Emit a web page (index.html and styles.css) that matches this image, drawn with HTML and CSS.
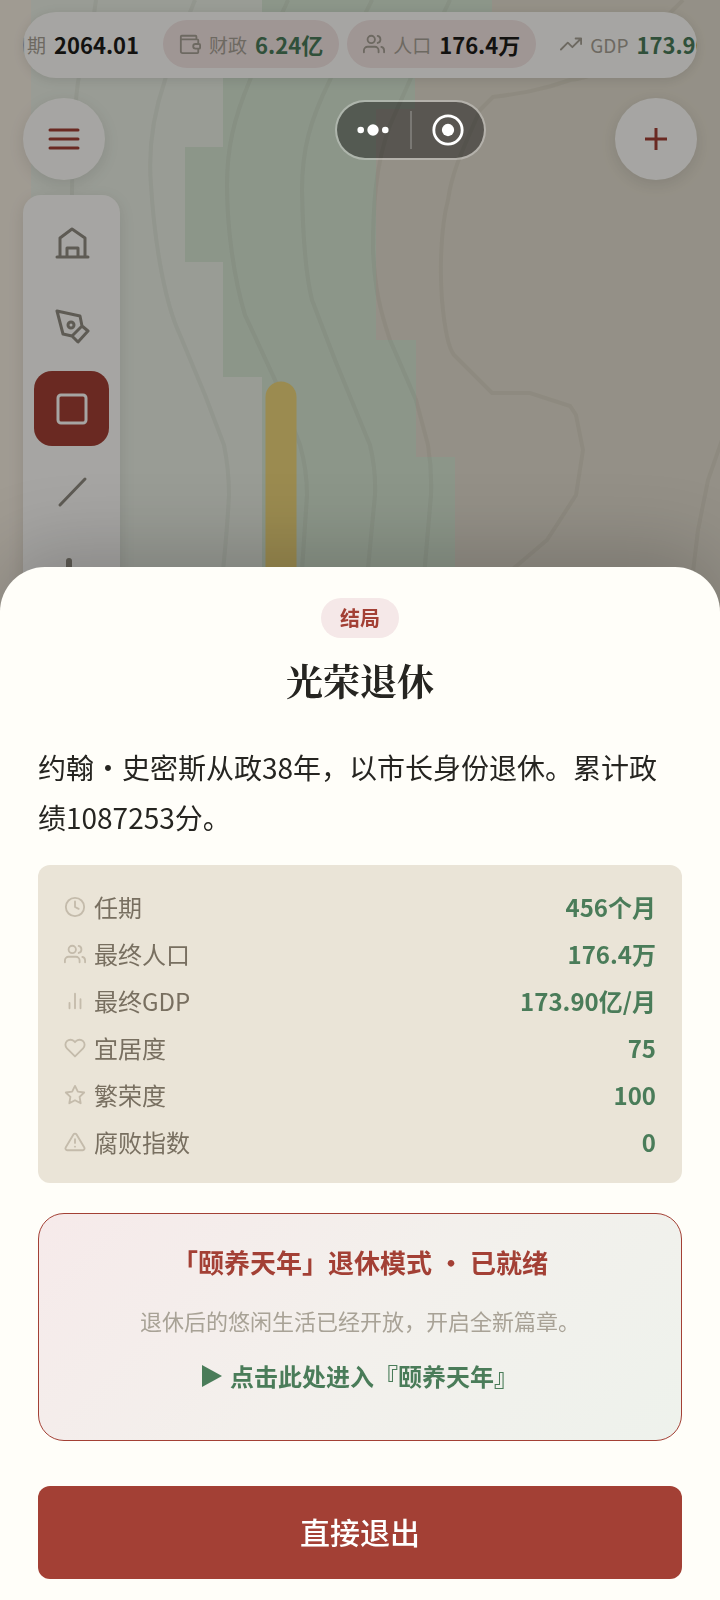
FILE: index.html
```
<!DOCTYPE html>
<html lang="zh-CN">
<head>
    <meta charset="UTF-8">
    <meta name="viewport" content="width=device-width, initial-scale=1.0">
    <title>光荣退休</title>
    <link rel="stylesheet" href="styles.css">
</head>
<body>
    <!-- 共用图标 -->
    <svg class="sprite" aria-hidden="true">
        <symbol id="i-wallet" viewBox="0 0 24 24"><path d="M19 7V4a1 1 0 0 0-1-1H3a1 1 0 0 0-1 1v16a2 2 0 0 0 2 2h16a1 1 0 0 0 1-1v-4M2 7h18a1 1 0 0 1 1 1v4h-3a2 2 0 0 0 0 5h4a1 1 0 0 0 1-1v-3a1 1 0 0 0-1-1h-1"/></symbol>
        <symbol id="i-users" viewBox="0 0 24 24"><path d="M17 21v-2a4 4 0 0 0-4-4H5a4 4 0 0 0-4 4v2M23 21v-2a4 4 0 0 0-3-3.87M16 3.13a4 4 0 0 1 0 7.75"/><circle cx="9" cy="7" r="4"/></symbol>
        <symbol id="i-trend" viewBox="0 0 24 24"><path d="M23 6l-9.500 9.500-5-5L1 18M17 6h6v6"/></symbol>
        <symbol id="i-clock" viewBox="0 0 24 24"><circle cx="12" cy="12" r="10"/><path d="M12 6v6l4 2"/></symbol>
        <symbol id="i-bars" viewBox="0 0 24 24"><path d="M6 20v-6M12 20V4M18 20V10"/></symbol>
        <symbol id="i-heart" viewBox="0 0 24 24"><path d="M20.840 4.610a5.500 5.500 0 0 0-7.780 0L12 5.670l-1.060-1.060a5.500 5.500 0 0 0-7.780 7.780L12 21.230l8.840-8.840a5.500 5.500 0 0 0 0-7.780z"/></symbol>
        <symbol id="i-star" viewBox="0 0 24 24"><path d="M12 2l3.090 6.260L22 9.270l-5 4.870 1.180 6.880L12 17.770l-6.180 3.250L7 14.140 2 9.270l6.910-1.010z"/></symbol>
        <symbol id="i-alert" viewBox="0 0 24 24"><path d="M10.290 3.860L1.820 18a2 2 0 0 0 1.710 3h16.940a2 2 0 0 0 1.710-3L13.710 3.860a2 2 0 0 0-3.420 0zM12 9v4M12 17v.1"/></symbol>
    </svg>

    <div class="game">
        <!-- 地图 -->
        <svg class="map" viewBox="0 0 720 620" preserveAspectRatio="xMidYMin slice" aria-hidden="true">
            <rect class="ground" width="720" height="620"/>
            <rect class="shore" width="31" height="620"/>
            <path class="grass" d="M31 0H262V32H223V147H185V262H223V377H262V620H31z"/>
            <path class="forest" d="M262 0H492V32H415V109H376V340H416V457H455V620H262V377H223V262H185V147H223V32H262z"/>
            <g class="contour">
                <path d="M96 0C92 35 82 60 78 82C73 120 72 160 72 200"/>
                <path d="M195 0C185 25 172 55 165 80C153 115 148 150 151 185C155 250 166 305 180 335L205 395L224 445Q229 470 229 495Q227 535 220 600"/>
                <path d="M288 0C278 25 260 50 250 80C233 120 227 150 227 185C227 225 233 275 245 315L275 380L300 445Q307 470 307 495L300 600"/>
                <path d="M372 0C358 30 340 55 330 80C310 120 302 150 302 190C303 245 307 280 312 300L335 360L370 445Q376 470 375 495L365 600"/>
                <path d="M450 0C436 30 420 55 410 80L390 125C375 165 373 210 373 250C375 290 380 310 390 340L416 400L428 445Q432 470 431 495L422 600"/>
                <path d="M683 0L668 15C640 50 610 75 570 80C540 91 515 94 493 97L480 110C465 145 452 170 448 200C440 230 440 275 442 300Q446 345 454 355L492 393H530L570 406L576 415L583 450L576 495L560 520L547 540L500 580"/>
                <path d="M722 440L708 480L698 530L692 580"/>
            </g>
            <path class="road" d="M281 397V640"/>
        </svg>

        <!-- 顶部状态栏 -->
        <header class="status">
            <ul class="status-list">
                <li class="chip">
                    <svg class="icon"><use href="#i-clock"/></svg>
                    <span class="chip-label">日期</span>
                    <b>2064.01</b>
                </li>
                <li class="chip chip-tint">
                    <svg class="icon"><use href="#i-wallet"/></svg>
                    <span class="chip-label">财政</span>
                    <b class="up">6.24亿</b>
                </li>
                <li class="chip chip-tint">
                    <svg class="icon"><use href="#i-users"/></svg>
                    <span class="chip-label">人口</span>
                    <b>176.4万</b>
                </li>
                <li class="chip">
                    <svg class="icon"><use href="#i-trend"/></svg>
                    <span class="chip-label">GDP</span>
                    <b class="up">173.90亿</b>
                </li>
            </ul>
        </header>

        <div class="actions">
            <button class="round" type="button" aria-label="菜单">
                <svg viewBox="0 0 36 36"><path d="M4 9h28M4 18h28M4 27h28"/></svg>
            </button>
            <button class="round" type="button" aria-label="新增">
                <svg class="plus" viewBox="0 0 36 36"><path d="M7 18h22M18 7v22"/></svg>
            </button>
        </div>

        <!-- 建造工具 -->
        <nav class="tools">
            <button class="tool" type="button" aria-label="建筑">
                <svg viewBox="0 0 36 36"><path d="M3 32h31M6 32V13l12-9 13 9v19M13 32v-9h11v9"/></svg>
            </button>
            <button class="tool" type="button" aria-label="钢笔">
                <svg viewBox="0 0 36 36"><path d="M3 3l23 5 2 10 6 5-10 11-6-6-9-2zM28 18l-10 10"/><circle cx="17" cy="17" r="3"/></svg>
            </button>
            <button class="tool active" type="button" aria-label="矩形">
                <svg viewBox="0 0 36 36"><rect x="4" y="4" width="28" height="28" rx="3"/></svg>
            </button>
            <button class="tool" type="button" aria-label="直线">
                <svg viewBox="0 0 36 36"><path d="M6 31L31 5"/></svg>
            </button>
            <button class="tool" type="button" aria-label="道路">
                <svg viewBox="0 0 36 36"><path class="thick" d="M15 4v28"/></svg>
            </button>
        </nav>
    </div>

    <div class="mask"></div>

    <!-- 小程序胶囊 -->
    <div class="capsule">
        <button type="button" aria-label="更多">
            <svg viewBox="0 0 36 36"><circle cx="5" cy="18" r="3.500"/><circle cx="18" cy="18" r="6"/><circle cx="31" cy="18" r="3.500"/></svg>
        </button>
        <button type="button" aria-label="关闭">
            <svg viewBox="0 0 36 36"><circle class="ring" cx="18" cy="18" r="15"/><circle cx="18" cy="18" r="6.500"/></svg>
        </button>
    </div>

    <!-- 结局弹层 -->
    <main class="sheet">
        <span class="badge">结局</span>
        <h1>光荣退休</h1>
        <p class="summary">约翰・史密斯从政38年，以市长身份退休。累计政绩1087253分。</p>

        <dl class="stats">
            <div class="stat">
                <dt><svg class="icon"><use href="#i-clock"/></svg>任期</dt>
                <dd>456个月</dd>
            </div>
            <div class="stat">
                <dt><svg class="icon"><use href="#i-users"/></svg>最终人口</dt>
                <dd>176.4万</dd>
            </div>
            <div class="stat">
                <dt><svg class="icon"><use href="#i-bars"/></svg>最终GDP</dt>
                <dd>173.90亿/月</dd>
            </div>
            <div class="stat">
                <dt><svg class="icon"><use href="#i-heart"/></svg>宜居度</dt>
                <dd>75</dd>
            </div>
            <div class="stat">
                <dt><svg class="icon"><use href="#i-star"/></svg>繁荣度</dt>
                <dd>100</dd>
            </div>
            <div class="stat">
                <dt><svg class="icon"><use href="#i-alert"/></svg>腐败指数</dt>
                <dd>0</dd>
            </div>
        </dl>

        <section class="retire">
            <h2>「颐养天年」退休模式 ・ 已就绪</h2>
            <p>退休后的悠闲生活已经开放，开启全新篇章。</p>
            <a href="#retire"><svg viewBox="0 0 20 22" aria-hidden="true"><path d="M0 0L20 11L0 22z"/></svg>点击此处进入『颐养天年』</a>
        </section>

        <button class="exit" type="button">直接退出</button>
    </main>
</body>
</html>
```
FILE: styles.css
```
*{box-sizing: border-box;}
ul, dl, dd, h1, h2, p{margin: 0; padding: 0;}
ul{list-style: none;}
a{text-decoration: none;}
button{border: 0; padding: 0; font-family: inherit; cursor: pointer;}
svg{display: block; flex: none;}

body{
    margin: 0;
    min-height: 100vh;
    background-color: #e4decf;
    color: #262521;
    font-family: "Noto Sans CJK SC", "Noto Sans", sans-serif;
}
.sprite{position: absolute; width: 0; height: 0;}
.icon{
    width: 22px;
    height: 22px;
    fill: none;
    stroke: currentColor;
    stroke-width: 2;
    stroke-linecap: round;
    stroke-linejoin: round;
}

/* 地图 */
.game{
    position: relative;
    height: 100vh;
    padding: 12px 23px;
    overflow: hidden;
}
.map{
    position: absolute;
    left: 0;
    top: 0;
    width: 100%;
}
.ground{fill: #e4decf;}
.shore{fill: #f6eee1;}
.grass{fill: #ebf0e5;}
.forest{fill: #d7e6d3;}
.contour{
    fill: none;
    stroke: #786e5a;
    stroke-opacity: .08;
    stroke-width: 4;
}
.road{
    fill: none;
    stroke: #eed67b;
    stroke-width: 31;
    stroke-linecap: round;
}

/* 顶部状态栏 */
.status{
    position: relative;
    height: 66px;
    border-radius: 33px;
    background-color: #fffefa;
    box-shadow: 0 2px 12px rgba(0,0,0,.1);
    overflow: hidden;
}
.status-list{
    display: flex;
    align-items: center;
    gap: 8px;
    height: 64px;
    /* 列表已向左滚动，首项露出一半 */
    margin-left: -61px;
}
.chip{
    display: flex;
    align-items: center;
    gap: 8px;
    flex: none;
    height: 48px;
    padding: 0 16px;
    border-radius: 24px;
    color: #a8a296;
    white-space: nowrap;
}
.chip-tint{background-color: #f5e6e4;}
.chip-label{font-size: 19px;}
.chip b{
    font-size: 22px;
    color: #1e1d1a;
}
.chip b.up{color: #4a7c59;}

.actions{
    position: relative;
    display: flex;
    justify-content: space-between;
    margin-top: 20px;
}
.round{
    display: grid;
    place-items: center;
    width: 82px;
    height: 82px;
    border-radius: 50%;
    background-color: #fffefa;
    box-shadow: 0 4px 16px rgba(0,0,0,.1);
}
.round svg{
    width: 36px;
    height: 36px;
    fill: none;
    stroke: #a34035;
    stroke-width: 3;
    stroke-linecap: round;
}
.round .plus{stroke-linecap: butt;}

.tools{
    position: relative;
    display: flex;
    flex-direction: column;
    gap: 8px;
    width: 97px;
    margin-top: 15px;
    padding: 10px 11px;
    border-radius: 18px;
    background-color: #fffefa;
    box-shadow: 0 4px 16px rgba(0,0,0,.1);
}
.tool{
    display: grid;
    place-items: center;
    height: 75px;
    border-radius: 18px;
    background: none;
    color: #918c82;
}
.tool svg{
    width: 36px;
    height: 36px;
    fill: none;
    stroke: currentColor;
    stroke-width: 3;
    stroke-linecap: round;
    stroke-linejoin: round;
}
.tool .thick{stroke-width: 6;}
.tool.active{
    background-color: #a34035;
    color: #fffefa;
}

.mask{
    position: fixed;
    inset: 0;
    background-color: rgba(0,0,0,.35);
}

.capsule{
    position: absolute;
    top: 100px;
    right: 234px;
    display: flex;
    align-items: center;
    width: 151px;
    height: 60px;
    border: 2px solid rgba(255,255,255,.3);
    border-radius: 30px;
    background-color: rgba(0,0,0,.4);
    background-clip: padding-box;
}
.capsule button{
    display: grid;
    place-items: center;
    flex: 1;
    height: 38px;
    background: none;
}
.capsule button + button{border-left: 2px solid rgba(255,255,255,.2);}
.capsule svg{
    width: 34px;
    height: 34px;
    fill: #fff;
}
.capsule .ring{
    fill: none;
    stroke: #fff;
    stroke-width: 3;
}

/* 结局弹层 */
.sheet{
    position: fixed;
    left: 0;
    right: 0;
    bottom: 0;
    display: flex;
    flex-direction: column;
    padding: 31px 38px 21px;
    border-radius: 45px 45px 0 0;
    background-color: #fffef9;
    box-shadow: 0 -16px 80px rgba(0,0,0,.2);
}
.badge{
    align-self: center;
    padding: 0 19px;
    border-radius: 20px;
    background-color: #f5e8e8;
    color: #a34035;
    font-size: 20px;
    font-weight: 700;
    line-height: 40px;
}
.sheet h1{
    margin: 20px 0 40px;
    font-family: "Noto Serif CJK SC", "Noto Serif SC", "Source Han Serif SC", "Noto Sans CJK SC", serif;
    font-size: 37px;
    font-weight: 700;
    line-height: 44px;
    text-align: center;
}
.summary{
    margin-bottom: 23px;
    font-size: 28px;
    line-height: 50px;
}

.stats{
    padding: 18px 26px;
    border-radius: 12px;
    background-color: #eae4d7;
    font-size: 24px;
    line-height: 47px;
}
.stat{
    display: flex;
    justify-content: space-between;
}
.stat dt{
    display: flex;
    align-items: center;
    gap: 8px;
    color: #786f60;
}
.stat .icon{color: #c4bbab;}
.stat dd{
    color: #4a7c59;
    font-weight: 700;
}

.retire{
    display: flex;
    flex-direction: column;
    align-items: center;
    margin: 30px 0 45px;
    padding: 28px 20px 46px;
    border: 1px solid #a34035;
    border-radius: 26px;
    background: linear-gradient(135deg, #f6eaea, #f3f0ec 50%, #eef2ec);
    text-align: center;
}
.retire h2{
    color: #a34035;
    font-size: 26px;
    line-height: 40px;
}
.retire p{
    margin: 20px 0;
    color: #a8a296;
    font-size: 22px;
    line-height: 36px;
}
.retire a{
    display: flex;
    align-items: center;
    gap: 8px;
    color: #4a7c59;
    font-size: 24px;
    font-weight: 700;
    line-height: 36px;
}
.retire a svg{
    width: 20px;
    height: 22px;
    fill: currentColor;
}

.exit{
    height: 93px;
    padding-bottom: 4px;
    border-radius: 12px;
    background-color: #a34035;
    color: #fff;
    font-size: 30px;
    font-weight: 500;
}
```
